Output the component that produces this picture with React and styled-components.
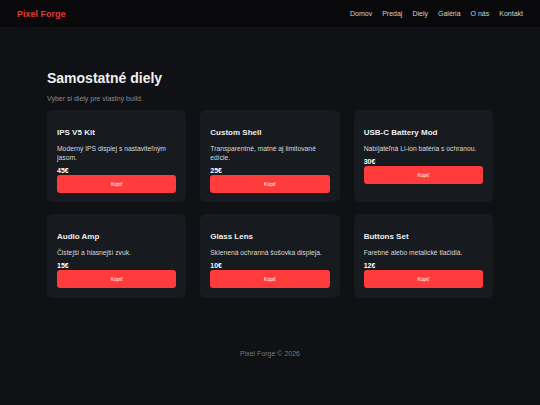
import React from "react";
import styled, { createGlobalStyle } from "styled-components";

const Global = createGlobalStyle`
  html, body { margin: 0; padding: 0; background: #0f1115; }
  body { font-family: "Liberation Sans", Arial, sans-serif; color: #e8e8e8; }
  * { box-sizing: border-box; }
`;

const Header = styled.header`
  height: 27px;
  padding: 0 17px;
  display: flex;
  align-items: center;
  justify-content: space-between;
  background: #09090b;
`;

const Logo = styled.div`
  color: #e53935;
  font-size: 9px;
  font-weight: 700;
`;

const Nav = styled.nav`
  display: flex;
  gap: 10px;
  font-size: 7px;
  color: #d4d4d4;
`;

const Main = styled.main`
  width: 446px;
  margin: 0 auto;
  padding-top: 42px;
`;

const Title = styled.h1`
  margin: 0;
  font-size: 14px;
  line-height: 18px;
  font-weight: 700;
  color: #f0f0f0;
`;

const Subtitle = styled.p`
  margin: 6.5px 0 0;
  font-size: 7px;
  line-height: 9px;
  color: #8a8d93;
`;

const Grid = styled.div`
  margin-top: 7.5px;
  display: grid;
  grid-template-columns: repeat(3, 1fr);
  gap: 12px 14px;
`;

const Card = styled.div`
  background: #171a1f;
  border-radius: 6px;
  padding: 18px 10px 9.5px;
  display: flex;
  flex-direction: column;
`;

const CardTitle = styled.h3`
  margin: 0;
  font-size: 8px;
  line-height: 10px;
  font-weight: 700;
  color: #eeeeee;
`;

const Desc = styled.p`
  margin: 7px 0 0;
  font-size: 6.75px;
  line-height: 8.5px;
  color: #d8d8d8;
`;

const Price = styled.div`
  margin-top: 4.5px;
  font-size: 7px;
  line-height: 8px;
  font-weight: 700;
  color: #ffffff;
`;

const BuyButton = styled.button`
  width: 100%;
  height: 18px;
  border: none;
  border-radius: 3px;
  background: #ff3b3b;
  color: #ffffff;
  font-family: inherit;
  font-size: 5px;
  cursor: pointer;
`;

const Footer = styled.footer`
  margin-top: 51px;
  text-align: center;
  font-size: 7px;
  line-height: 9px;
  color: #75787d;
`;

const nav = ["Domov", "Predaj", "Diely", "Galéria", "O nás", "Kontakt"];

const parts = [
  { name: "IPS V5 Kit", desc: "Moderný IPS displej s nastaviteľným jasom.", price: "45€" },
  { name: "Custom Shell", desc: "Transparentné, matné aj limitované edície.", price: "25€" },
  { name: "USB-C Battery Mod", desc: "Nabíjateľná Li-ion batéria s ochranou.", price: "30€" },
  { name: "Audio Amp", desc: "Čistejší a hlasnejší zvuk.", price: "15€" },
  { name: "Glass Lens", desc: "Sklenená ochranná šošovka displeja.", price: "10€" },
  { name: "Buttons Set", desc: "Farebné alebo metalické tlačidlá.", price: "12€" },
];

export default function App() {
  return (
    <>
      <Global />
      <Header>
        <Logo>Pixel Forge</Logo>
        <Nav>
          {nav.map((n) => (
            <span key={n}>{n}</span>
          ))}
        </Nav>
      </Header>
      <Main>
        <Title>Samostatné diely</Title>
        <Subtitle>Vyber si diely pre vlastný build.</Subtitle>
        <Grid>
          {parts.map((p) => (
            <Card key={p.name}>
              <CardTitle>{p.name}</CardTitle>
              <Desc>{p.desc}</Desc>
              <Price>{p.price}</Price>
              <BuyButton>Kúpiť</BuyButton>
            </Card>
          ))}
        </Grid>
        <Footer>Pixel Forge © 2026</Footer>
      </Main>
    </>
  );
}
